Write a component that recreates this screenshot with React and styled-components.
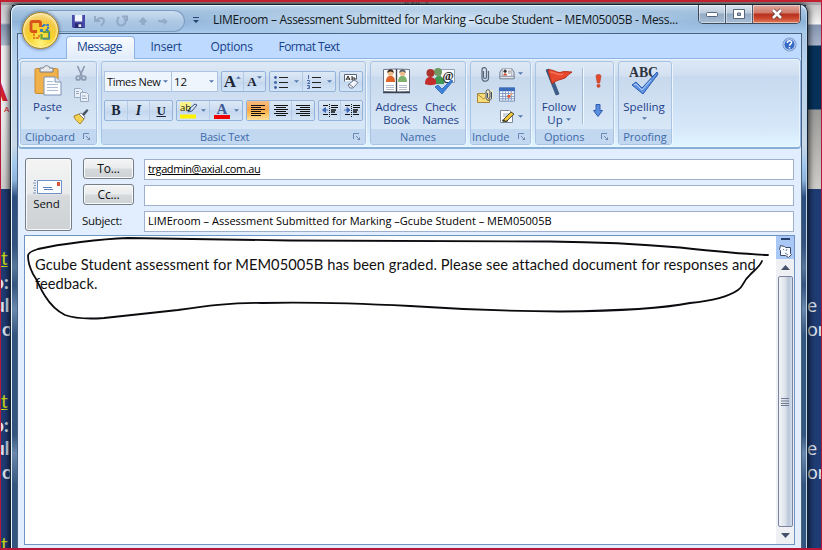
import React from "react";
import styled, { createGlobalStyle, css } from "styled-components";

const GlobalStyle = createGlobalStyle`
  *, *::before, *::after { box-sizing: border-box; }
  body { margin: 0; }
  button { margin: 0; padding: 0; font: inherit; color: inherit; }
  svg { display: block; flex: none; overflow: visible; }
`;

const Screen = styled.div`
  position: relative;
  width: 822px;
  height: 550px;
  overflow: hidden;
  background: #1f3c74;
  font-family: "Open Sans", "Noto Sans", sans-serif;
  font-size: 12px;
  line-height: 16px;
  white-space: nowrap;
`;

/* ---------- page behind the window ---------- */

const Backdrop = styled.div`
  display: flex;
  justify-content: space-between;
  height: 550px;
`;
const SideStrip = styled.div`
  width: ${(p) => p.$w}px;
  height: 550px;
  overflow: hidden;
  background: ${(p) => p.$bg};
`;
const Logo = styled.div`
  height: 238px;
  padding-top: 72px;
  color: #d5202c;
  font: bold 34px/34px "Liberation Sans", sans-serif;
  text-indent: -16px;
  small { display: block; font: 8px/8px "Liberation Sans", sans-serif; text-indent: 4px; }
`;
const Passage = styled.div`
  height: 143px;
  padding-top: 8px;
  font: ${(p) => (p.$bold ? "bold" : "normal")} 19px/23.6px Lato, sans-serif;
  color: #dfe5ef;
  u { color: #c9d814; font-weight: normal; }
`;
const Line = styled.div`
  height: 23.6px;
  text-indent: ${(p) => p.$x || 0}px;
`;
const TopStrip = styled.div`
  position: absolute;
  inset: 0 0 auto 0;
  height: 5px;
  overflow: hidden;
  background: #a9a4a8;
  color: #555;
  font-size: 10px;
  line-height: 2px;
  padding-left: 401px;
`;
const RedFrame = styled.div`
  position: absolute;
  inset: 0;
  border: solid #b5183a;
  border-width: 2px 1px 2px 1px;
  border-top-color: #c2202e;
  pointer-events: none;
`;

/* ---------- window chrome ---------- */

const Window = styled.div`
  position: absolute;
  left: 10px;
  top: 4px;
  width: 798px;
  height: 562px;
  border: 1px solid #15202e;
  border-radius: 8px 8px 0 0;
  padding: 0 6px;
  box-shadow: inset 1px 1px 0 #e8f3fc, inset -1px 0 0 #b9d4ec, 0 0 6px 1px rgba(0, 0, 0, 0.75);
  background:
    linear-gradient(180deg, #b4cde6 0, #8fb1d4 12px, #a8c6e5 28px, #b7d3ee 60px, #c8d8e6 140px, #a0c6ec 160px, #8fb4dc 175px, #2d4e80 192px, #33527f 240px, #56779a 262px, #34547f 280px, #6a88ad 304px, #34557f 330px, #34557f 430px, #6a88ad 448px, #34557f 480px, #34557f 100%);
`;
const TitleBar = styled.div`
  display: flex;
  height: 28px;
  margin: 0 -5px;
  padding: 0 5px 0 34px;
  border-radius: 7px 7px 0 0;
  background:
    radial-gradient(ellipse 280px 15px at 435px 16px, rgba(222, 236, 250, 0.95), rgba(200, 222, 245, 0)),
    linear-gradient(#c3d8ec 0, #a5c3e0 6px, #8eb3d8 17px, #a9cbec 28px);
  box-shadow: inset 0 1px 0 #eaf4fd;
`;
const QuickAccess = styled.div`
  display: flex;
  align-items: center;
  gap: 8px;
  width: 137px;
  height: 22px;
  margin: 5px 0 0 2px;
  padding-left: 24px;
  border: 1px solid #7e9cc0;
  border-left: 0;
  border-radius: 0 12px 12px 0;
  background: linear-gradient(rgba(215, 230, 245, 0.75), rgba(160, 190, 222, 0.5));
`;
const Customize = styled.div`
  margin: 12px 0 0 8px;
`;
const Title = styled.div`
  margin: 7px 0 0 14px;
  width: 473px;
  color: #111820;
  font-size: 12px;
  letter-spacing: -0.3px;
`;
const Caption = styled.div`
  display: flex;
  width: 103px;
  height: 19px;
  margin-left: auto;
  border: 1px solid #3c4a5c;
  border-top: 0;
  border-radius: 0 0 5px 5px;
  overflow: hidden;
`;
const CaptionButton = styled.button`
  display: flex;
  align-items: center;
  justify-content: center;
  flex: ${(p) => (p.$close ? 48 : 27)};
  border: 0;
  border-left: ${(p) => (p.$first ? "0" : "1px solid #4a5a70")};
  box-shadow: inset 0 0 0 1px rgba(255, 255, 255, 0.45);
  background: ${(p) =>
    p.$close
      ? "linear-gradient(#dfa79c 0, #d07a6a 8px, #b8301c 9px, #c8432c 13px, #e38a68 19px)"
      : "linear-gradient(#dbe5ee 0, #bccbdb 8px, #94abc4 9px, #a8bfd6 19px)"};
`;
const OfficeOrb = styled.button`
  position: absolute;
  left: 11px;
  top: 7px;
  width: 37px;
  height: 37px;
  border: 1px solid #a87f1c;
  border-radius: 50%;
  display: grid;
  place-items: center;
  background: radial-gradient(circle at 50% 85%, #fff27c 0, #f7d32a 35%, #f3c844 62%, #fbf0cc 100%);
  box-shadow: 0 0 3px 1px rgba(70, 90, 120, 0.6), inset 0 0 2px 1px #fff3c0;
`;
const Client = styled.div`
  width: 785px;
  height: 530px;
  border: 1px solid #4c6482;
  border-bottom: 0;
  background: #e2eefd;
`;

/* ---------- ribbon ---------- */

const Tabs = styled.div`
  display: flex;
  height: 24px;
  background: #bfdaff;
  padding: 2px 4px 0 48px;
  color: #15428b;
`;
const Tab = styled.div`
  height: 22px;
  width: ${(p) => p.$w}px;
  padding-top: 3px;
  text-align: center;
  letter-spacing: ${(p) => p.$ls || 0}px;
  ${(p) =>
    p.$active &&
    css`
      border: 1px solid #8db2e3;
      border-bottom: 0;
      border-radius: 4px 4px 0 0;
      background: linear-gradient(#f8fbff, #e1ecfa);
      padding: 2px 2px 0 0;
      height: 23px;
      position: relative;
    `}
`;
const Help = styled.div`
  margin: 1px 0 0 auto;
`;
const RibbonPanel = styled.div`
  display: flex;
  gap: 4px;
  height: 91px;
  padding: 3px 0 0 1px;
  border: 1px solid #8db2e3;
  border-bottom: 2px solid #86b0d8;
  border-radius: 4px;
  background: linear-gradient(#dce9f7 0, #d0def0 16px, #c7d9ee 17px, #d5e7f9 68px, #dff4ff 86px);
  box-shadow: inset 0 0 0 1px rgba(240, 248, 255, 0.7);
`;
const Group = styled.section`
  display: flex;
  flex-direction: column;
  width: ${(p) => p.$w}px;
  height: 84px;
  margin-top: -1px;
  border: 1px solid #a9c4e2;
  border-radius: 3px;
  overflow: hidden;
  box-shadow: 1px 1px 0 #edf5fe;
  background: linear-gradient(#dee9f5 0, #d3e0f0 14px, #c8d9ed 15px, #d9e8f7 68px);
`;
const GroupBody = styled.div`
  display: flex;
  flex: 1;
`;
const GroupLabel = styled.div`
  display: flex;
  align-items: center;
  justify-content: ${(p) => (p.$spread ? "space-between" : "center")};
  height: 15px;
  padding: 0 ${(p) => p.$pr || 0}px 0 ${(p) => p.$pl || 0}px;
  background: #c1d8f0;
  color: #3e6aaa;
  font-size: 11px;
  line-height: 15px;
  letter-spacing: ${(p) => p.$ls || 0}px;
`;
const BigButton = styled.button`
  display: flex;
  flex-direction: column;
  align-items: center;
  width: ${(p) => p.$w}px;
  padding-top: ${(p) => p.$pt ?? 3}px;
  border: 0;
  background: none;
  color: #1c3f8a;
  font-size: 11.5px;
  line-height: 13px;
  letter-spacing: ${(p) => p.$ls || 0}px;
  svg.art { margin-bottom: ${(p) => p.$gap ?? 4}px; }
  svg.caret { margin-top: 4px; }
`;
const Inline = styled.span`
  display: flex;
  align-items: center;
  gap: 3px;
  button & svg.caret { margin-top: 0; }
`;
const IconColumn = styled.div`
  display: flex;
  flex-direction: column;
  align-items: ${(p) => p.$align || "center"};
  gap: ${(p) => p.$gap}px;
  padding-top: ${(p) => p.$pt}px;
  width: ${(p) => p.$w}px;
`;
const IconWithCaret = styled.span`
  display: flex;
  align-items: center;
  gap: 3px;
`;
const Separator = styled.div`
  width: 2px;
  height: 56px;
  margin-top: 6px;
  border-left: 1px solid #9fbbdc;
  border-right: 1px solid #f2f8ff;
`;
const TextTools = styled.div`
  display: flex;
  flex-direction: column;
  gap: 8px;
  padding: 9px 0 0 2px;
`;
const ToolRow = styled.div`
  display: flex;
  gap: 3px;
  height: 21px;
`;
const Combo = styled.div`
  display: flex;
  align-items: center;
  justify-content: space-between;
  width: ${(p) => p.$w}px;
  margin-right: ${(p) => p.$mr || 0}px;
  padding: 0 3px 0 2px;
  border: 1px solid #abc4e4;
  background: #eff5fd;
  color: #111;
  font-size: ${(p) => p.$fs || 11.5}px;
  letter-spacing: ${(p) => p.$ls || 0}px;
`;
const ToolSet = styled.div`
  display: flex;
  width: ${(p) => p.$w}px;
  border: 1px solid #93b3da;
  border-radius: 2px;
  background: linear-gradient(#dde9f6, #cbdcf0 50%, #c2d6ed 51%, #d3e4f6);
`;
const Tool = styled.button`
  display: flex;
  align-items: center;
  justify-content: center;
  gap: ${(p) => p.$gap ?? 4}px;
  flex: 1;
  border: 0;
  border-right: 1px solid #b4cbe7;
  background: ${(p) => (p.$on ? "linear-gradient(#f5bd84, #f7a94d 45%, #fbb84e 60%, #fde09a)" : "none")};
  &:last-child { border-right: 0; }
  ${(p) => p.$raised && css`svg.caret { align-self: flex-start; margin-top: 4px; }`}
`;
const Glyph = styled.span`
  color: #1b2536;
  font: ${(p) => p.$font};
  text-decoration: ${(p) => (p.$underline ? "underline" : "none")};
`;

/* ---------- message header ---------- */

const Header = styled.div`
  display: flex;
  gap: 11px;
  padding: 10px 0 0 7px;
  height: 86px;
`;
const buttonFace = css`
  border: 1px solid #747c86;
  border-radius: 3px;
  background: linear-gradient(#f4f4f4, #e9ebec 48%, #d7dadd 52%, #cfd2d5);
  box-shadow: inset 0 0 0 1px #f8fafb;
  color: #111;
`;
const SendButton = styled.button`
  ${buttonFace}
  display: flex;
  flex-direction: column;
  align-items: center;
  width: 47px;
  height: 73px;
  margin-top: -1px;
  padding: 21px 2px 0 0;
  font-size: 11.5px;
  span { margin: 2px 2px 0 0; letter-spacing: -0.1px; }
`;
const Fields = styled.div`
  display: grid;
  grid-template-columns: 51px 650px;
  grid-auto-rows: 21px;
  column-gap: 10px;
  row-gap: 5px;
`;
const FieldButton = styled.button`
  ${buttonFace}
  height: 21px;
  margin-top: -1px;
  padding-top: 1px;
  font-size: 12px;
  letter-spacing: -0.2px;
`;
const FieldLabel = styled.div`
  padding-top: 2px;
  margin-left: -1px;
  font-size: 11.5px;
  letter-spacing: -0.3px;
  color: #111;
`;
const Field = styled.div`
  height: 21px;
  padding: 1px 3px;
  border: 1px solid #9fb0ce;
  background: #fff;
  color: #000;
  font-size: 11px;
  letter-spacing: ${(p) => p.$ls || 0}px;
  text-decoration: ${(p) => (p.$link ? "underline" : "none")};
`;

/* ---------- message body ---------- */

const Editor = styled.div`
  display: flex;
  width: 771px;
  height: 310px;
  margin-left: 6px;
  border: 1px solid #6f93c4;
  background: #fff;
`;
const Copy = styled.div`
  width: 751px;
  padding: 19px 0 0 10px;
  color: #111;
  font: 14.67px/19px Lato, "Liberation Sans", sans-serif;
  font-variant-ligatures: none;
  letter-spacing: 0.05px;
`;
const ScrollBar = styled.div`
  display: flex;
  flex-direction: column;
  align-items: center;
  width: 18px;
  background: #eef0f4;
`;
const RulerToggle = styled.div`
  display: flex;
  flex-direction: column;
  align-items: center;
  gap: 5px;
  width: 18px;
  height: 23px;
  padding-top: 2px;
  background: #a9c8f5;
`;
const SplitHandle = styled.div`
  width: 9px;
  height: 2px;
  background: #26406e;
`;
const ArrowCell = styled.div`
  display: grid;
  place-items: center;
  height: 17px;
`;
const Thumb = styled.div`
  display: grid;
  place-items: center;
  width: 15px;
  flex: 1;
  border: 1px solid #79849f;
  border-radius: 2px;
  background: linear-gradient(90deg, #f1f3f6, #dfe4ec 45%, #b9c6d8 75%, #d4e0ee);
`;
const Ink = styled.svg`
  position: absolute;
  left: 0;
  top: 0;
  pointer-events: none;
`;

/* ---------- drawings ---------- */

const Caret = ({ up, size = 5 }) => (
  <svg className="caret" width={size} height="3" viewBox="0 0 6 3">
    <path d={up ? "M0 3h6L3 0z" : "M0 0h6L3 3z"} fill="#5377ab" />
  </svg>
);
const Launcher = () => (
  <svg width="8" height="8" viewBox="0 0 8 8" fill="none" stroke="#6a8ab5">
    <path d="M.5 6V.5H6M3 3l3 3" />
    <path d="M7.5 3v4.5H3z" fill="#6a8ab5" stroke="#f0f6fd" strokeWidth=".5" />
  </svg>
);
const OfficeLogo = () => (
  <svg width="23" height="23" viewBox="0 0 23 23" fill="none">
    <path d="M8 12.500H3.500Q2 12.500 2 11V4Q2 2.500 3.500 2.500H10Q11.500 2.500 11.500 4V8" stroke="#d9541a" strokeWidth="2.800" />
    <path d="M14 6h5v5h-3M14 6v2" stroke="#3f7fc0" strokeWidth="2" strokeDasharray="2.500 .8" />
    <path d="M5 14.500V19h5v-3" stroke="#e07f1b" strokeWidth="1.800" strokeDasharray="2.500 .8" />
    <path d="M14 13h6v6.500h-7.500V15" stroke="#6ba33a" strokeWidth="2.200" />
    <path d="M14 20h6.500V13" stroke="#3f7fc0" strokeWidth="1" />
    <path d="M11 10h3v3h-3z" fill="#3f7fc0" />
  </svg>
);
const SaveIcon = () => (
  <svg width="13" height="13" viewBox="0 0 14 14">
    <path d="M0 0h14v14H1l-1-1z" fill="#4749a8" />
    <path d="M3 0h8v7H3z" fill="#f1f5fc" />
    <path d="M3 9h8v5H3z" fill="#24296d" />
    <path d="M7 10h3v3H7z" fill="#eef" />
  </svg>
);
const UndoIcon = () => (
  <svg width="14" height="12" viewBox="0 0 14 12" fill="none" stroke="#93a9c6" strokeWidth="2">
    <path d="M3 5.500C5 3 11 1 11 6c0 2-1 3-3 5M2 1v5h5" />
  </svg>
);
const RedoIcon = () => (
  <svg width="14" height="12" viewBox="0 0 14 12" fill="none" stroke="#93a9c6" strokeWidth="2">
    <path d="M4 2C1 5 2 10.500 6 10.500S12 6 9 3M7 1.500h5V6" />
  </svg>
);
const NavArrow = ({ down }) => (
  <svg width="12" height="9" viewBox="0 0 12 9" fill="#93aac8">
    <path d={down ? "M1 3h5V1l5 3.500L7 8V6L1 5z" : "M6 0l5 5H8v3H4V5H1z"} />
  </svg>
);
const HelpIcon = () => (
  <svg width="15" height="15" viewBox="0 0 15 15">
    <circle cx="7.500" cy="7.500" r="6.500" fill="#3469c7" stroke="#6f91c9" />
    <circle cx="7.500" cy="7.500" r="5.600" fill="none" stroke="#e9f2ff" />
    <path d="M5.300 6c0-3 4.600-2.800 4.300-.3-.2 1.300-2 1.300-2 3M7.500 10v1.400" fill="none" stroke="#fff" strokeWidth="1.500" />
  </svg>
);
const PasteIcon = () => (
  <svg className="art" width="28" height="31" viewBox="0 0 28 31">
    <rect x="1" y="3.500" width="23" height="25" rx="1.500" fill="#f0b04a" stroke="#c98a30" />
    <path d="M6 3h3.500c0-3 6-3 6 0H19v4H6z" fill="#e6e8eb" stroke="#777f8b" />
    <path d="M10 12h11l6 5v13H10z" fill="#fbfdff" stroke="#7e92b1" />
    <path d="M21 12v5h6" fill="#dfe9f6" stroke="#7e92b1" />
    <path d="M13 16.500h6M13 19.500h11M13 22.500h11M13 25.500h11" stroke="#aebdd5" />
  </svg>
);
const CutIcon = () => (
  <svg width="12" height="15" viewBox="0 0 12 15" fill="none" stroke="#8c9bb2" strokeWidth="1.700">
    <path d="M2.500 0l4.500 10M9.500 0L5 10" />
    <circle cx="3.200" cy="12" r="2" />
    <circle cx="8.800" cy="12" r="2" />
  </svg>
);
const CopyIcon = () => (
  <svg width="15" height="14" viewBox="0 0 15 14" fill="#e9eff7" stroke="#9aaac3">
    <path d="M.5.5h6l2 2v7h-8z" />
    <path d="M6.500 4.500h6l2 2v7h-8zM8 8h4M8 10.500h5M2 3.500h3M2 5.500h3" />
  </svg>
);
const BrushIcon = () => (
  <svg width="16" height="15" viewBox="0 0 16 15">
    <path d="M1 7l5-2 5 5-4 5C5 13 1 10 1 7z" fill="#f2d250" stroke="#a5832a" />
    <path d="M6 5l2-1 4 4-1 2z" fill="#fff" stroke="#667" strokeWidth=".7" />
    <path d="M9 5l5-5 1.500 1.500L11 7z" fill="#4b5464" />
  </svg>
);
const ListIcon = ({ numbered }) => (
  <svg width="14" height="14" viewBox="0 0 14 14">
    <path d="M5 2.500h9M5 7.500h9M5 12.500h9" stroke="#222" />
    {numbered ? (
      <path d="M1.500 0v4M0 5.500h2.500V7L.5 8.500H3M0 10.500h2.500v3H0M1 12h1.500" fill="none" stroke="#4c6aa8" />
    ) : (
      <g fill="#3f61a5"><circle cx="1.500" cy="2.500" r="1.400" /><circle cx="1.500" cy="7.500" r="1.400" /><circle cx="1.500" cy="12.500" r="1.400" /></g>
    )}
  </svg>
);
const ClearIcon = () => (
  <svg width="17" height="17" viewBox="0 0 17 17">
    <path d="M1.500 8.500v-7h12v5" fill="#fff" stroke="#56647c" />
    <path d="M3 7l2-4 2 4M4 6h3M9 3v4h3V5H9" fill="none" stroke="#222" />
    <path d="M5 12l6-5 4 2.500-5 5.500H7z" fill="#f7f8fb" stroke="#6e7890" />
    <path d="M6 11l4 3" stroke="#6e7890" />
  </svg>
);
const AlignIcon = ({ kind }) => {
  const rows = [14, 10, 14, 10, 14, 10];
  return (
    <svg width="14" height="11" viewBox="0 0 14 11">
      {rows.map((w, i) => {
        const x = kind === "left" ? 0 : kind === "center" ? (14 - w) / 2 : 14 - w;
        return <rect key={i} x={x} y={i * 2} width={w} height="1" fill="#111" />;
      })}
    </svg>
  );
};
const IndentIcon = ({ inward }) => (
  <svg width="16" height="13" viewBox="0 0 16 13">
    <path d="M1 1.500h5M9 1.500h7M9 3.500h7M1 10.500h5M9 10.500h6" stroke="#111" />
    <path d="M9 6h5M9 8h4" stroke="#111" strokeWidth="1.600" />
    <path d="M7.500 0v13" stroke="#111" strokeDasharray="1 1" />
    <path d={inward ? "M0 6h3M3 3.500l3 2.500-3 2.500z" : "M6 6H3M3.500 3.500L.5 6l3 2.500z"} fill="#3d67b5" stroke="#3d67b5" strokeWidth=".9" />
  </svg>
);
const HighlightIcon = () => (
  <svg width="17" height="17" viewBox="0 0 17 17">
    <path d="M0 0h11v9H0z" fill="#f8f48a" />
    <path d="M0 12.500h16v4H0z" fill="#fff200" />
    <path d="M8 10l1-3 6-5 2 1-5 6z" fill="#dbe4f4" stroke="#37517c" />
    <text x="0" y="8.500" fontSize="9.500" fontFamily="Open Sans" fill="#111">ab</text>
  </svg>
);
const FontColorIcon = () => (
  <svg width="16" height="17" viewBox="0 0 16 17">
    <path d="M0 13h16v4H0z" fill="#f00000" />
    <text x="2.500" y="11.500" fontSize="15" fontWeight="bold" fontFamily="Liberation Serif" fill="#3e5a95">A</text>
  </svg>
);
const Head = ({ x, y, hair, coat }) => (
  <g transform={`translate(${x} ${y})`}>
    <path d="M0 13c0-5 2-6 4.500-6S9 8 9 13z" fill={coat} />
    <circle cx="4.500" cy="4" r="3" fill="#eebd8e" />
    <path d="M1.200 4c0-5 6.600-5 6.600 0-2-2-4-2-6.600 0z" fill={hair} />
  </g>
);
const AddressBookIcon = () => (
  <svg className="art" width="29" height="27" viewBox="0 0 29 27">
    <path d="M1.500 2.500l13-.5v23l-13-.5zM27.500 2.500l-13-.5v23l13-.5z" fill="#fff" stroke="#6b7587" />
    <path d="M14.500 2v23M1 25.500h27" stroke="#3b4353" strokeWidth="1.400" />
    <Head x={4} y={2} hair="#3a2b22" coat="#e0632a" />
    <Head x={16} y={2} hair="#57606f" coat="#7fb070" />
    <path d="M4 18.500h8M4 20.500h8M4 22.500h8M17 18.500h8M17 20.500h8M17 22.500h8" stroke="#b3bac7" />
  </svg>
);
const CheckNamesIcon = () => (
  <svg className="art" width="31" height="28" viewBox="0 0 31 28">
    <path d="M15.500 2.500h14v13h-14z" fill="#f8fafc" stroke="#95a0b2" />
    <circle cx="13" cy="5" r="4" fill="#6f9a62" />
    <path d="M9 17c0-6 2-8 5-8s6 3 5 8z" fill="#3f9853" />
    <circle cx="5.500" cy="6" r="4" fill="#a8342d" />
    <path d="M0 17c0-5 2-7 5-7s7 2 6 7c-3 1.500-8 1.500-11 0z" fill="#c42b2b" />
    <text x="17.500" y="12.500" fontSize="12" fontWeight="bold" fontFamily="Liberation Serif" fill="#222">@</text>
    <path d="M10 20l3-2 4 4 9-9 2 1-11 13z" fill="#3d82dd" stroke="#2257a5" strokeWidth=".7" />
  </svg>
);
const ClipIcon = () => (
  <svg width="8" height="15" viewBox="0 0 8 15" fill="none" stroke="#58647a" strokeWidth="1.200">
    <path d="M2.500 4v6c0 2 3 2 3 0V3C5.500-.5 1 0 1 3v8c0 4.500 6.500 4 6.500 0V4" />
  </svg>
);
const AttachItemIcon = () => (
  <svg width="16" height="15" viewBox="0 0 16 15">
    <path d="M.5 4.500h12v9H.5z" fill="#f7dc78" stroke="#a9873a" />
    <path d="M.5 5l6 5 6-5" fill="none" stroke="#a9873a" />
    <path d="M8 1h8v9H8z" fill="#f5ecc0" opacity=".8" />
    <path d="M10.500 4v4c0 2 2.500 2 2.500 0V3c0-3-4-3-4 0v6c0 3 5.500 3 5.500 0V3" fill="none" stroke="#434d62" />
  </svg>
);
const CardIcon = () => (
  <svg width="16" height="13" viewBox="0 0 17 13">
    <path d="M1 5l2-3h11l2 3v7H1z" fill="#e4e8ef" stroke="#68758b" />
    <path d="M3.500 1.500h10v8h-10z" fill="#fff" stroke="#7e8ba0" strokeWidth=".7" />
    <circle cx="6.500" cy="4" r="1.700" fill="#333" /><path d="M4.500 8.500c0-3 4-3 4 0z" fill="#d5472d" />
    <path d="M9.500 4h3M9.500 6h3" stroke="#777" />
    <path d="M1 9.500h15V12H1z" fill="#dfe3ea" stroke="#68758b" strokeWidth=".7" />
  </svg>
);
const CalendarIcon = () => (
  <svg width="16" height="15" viewBox="0 0 17 15">
    <path d="M.5.5h16v14H.5z" fill="#fff" stroke="#6c86b3" />
    <path d="M0 0h17v4H0z" fill="#3d6cbb" />
    <path d="M4 4v10M7 4v10M10 4v10M13 4v10M1 6.500h15M1 9.500h15M1 12h15" stroke="#7b95c3" />
    <path d="M9 8h3v3H9z" fill="#e4552d" /><path d="M12 6h2v2h-2z" fill="#f2a086" />
  </svg>
);
const SignatureIcon = () => (
  <svg width="16" height="15" viewBox="0 0 16 15">
    <path d="M1.500 1.500h9l3 3v9h-12z" fill="#fff" stroke="#7c879a" />
    <path d="M4 5h6M4 7h5" stroke="#9aa8c0" />
    <path d="M5 10l7-7 3 2-7 7-4 1z" fill="#edc63b" stroke="#4b4a36" />
    <path d="M3 11.500c3-2 3 3 6 0" fill="none" stroke="#222" />
  </svg>
);
const FlagIcon = () => (
  <svg className="art" width="30" height="28" viewBox="0 0 30 28">
    <path d="M2 2l3-1 10 25-3 1z" fill="#3c608f" stroke="#284468" strokeWidth=".7" />
    <path d="M4 2c6-1 9 4 14 2 3-1 6 0 10 0-5 3-5 6-10 7-4 1-7 2-10 5z" fill="#e8482d" stroke="#b62e1a" />
    <path d="M6 4c5 0 8 4 13 2" stroke="#f7765a" strokeWidth="1.500" fill="none" />
  </svg>
);
const UrgentIcon = () => (
  <svg width="7" height="14" viewBox="0 0 7 14" fill="#e2492b" stroke="#b93720" strokeWidth=".6">
    <path d="M1 2c0-2 5-2 5 0L4.700 9H2.300z" /><circle cx="3.500" cy="11.800" r="1.600" />
  </svg>
);
const LowIcon = () => (
  <svg width="10" height="13" viewBox="0 0 10 13">
    <path d="M3 .5h4v6h2.500L5 12.500.5 6.500H3z" fill="#5c8ee0" stroke="#2c5cae" />
  </svg>
);
const SpellingIcon = () => (
  <svg className="art" width="32" height="30" viewBox="0 0 32 30">
    <text x="1" y="11" fontSize="14" fontWeight="bold" fontFamily="Liberation Serif" fill="#2d3440" textLength="29" lengthAdjust="spacingAndGlyphs">ABC</text>
    <path d="M4 19l4-3 6 6L29 6l1 2-15 20z" fill="#5f93e6" stroke="#2b5bae" />
    <path d="M6 19l2-1 6 6 9-10" stroke="#b2cffa" fill="none" />
  </svg>
);
const SendIcon = () => (
  <svg width="29" height="14" viewBox="0 0 29 14">
    <path d="M4.500.5h24v13h-24z" fill="#fcfdff" stroke="#6f93c9" />
    <path d="M1 .5h2M0 3h3M1 5.500h2M0 8h3M1 10.500h2M0 13h3" stroke="#8196b8" />
    <path d="M24 2h3v4h-3z" fill="#d9563a" />
    <path d="M10 7.500h9M11 9.500h9" stroke="#5c7ebd" />
  </svg>
);
const PageBrowseIcon = () => (
  <svg width="13" height="13" viewBox="0 0 13 13">
    <path d="M1.500.5l4 1 1 1h5v6l1 1-3 3-3-2h-5v-5l-1-1z" fill="#f8fbff" stroke="#3d4c67" />
    <path d="M4 4l1 1M8 4l-1 2M6 8l3 2" stroke="#6f7c95" />
  </svg>
);

/* ---------- composition ---------- */

const LeftPassage = () => (
  <Passage $bold>
    <Line $x={1}><u>t</u></Line><Line $x={-7}>o:</Line><Line $x={-6}>ul</Line><Line $x={2}>o</Line>
  </Passage>
);
const RightPassage = () => (
  <Passage>
    <Line /><Line /><Line $x={1}>e</Line><Line $x={1}>on</Line>
  </Passage>
);

const PageBehind = () => (
  <Backdrop>
    <SideStrip $w={12} $bg="linear-gradient(#c4c4c8 0, #d5d8dd 23px, #8295b1 25px, #b0bed0 45px, #efeff1 46px, #efeff1 110px, #cdccca 189px, #1f3c74 189px)">
      <Logo>A<small>A</small></Logo>
      <LeftPassage /><LeftPassage /><LeftPassage />
    </SideStrip>
    <SideStrip $w={16} $bg="linear-gradient(#bbb 0, #f4f4f4 24px, #8595b0 25px, #a7b3c9 45px, #06325a 46px, #06325a 109px, #9a9a98 110px, #cfcdc9 189px, #1f3c74 189px)">
      <Logo />
      <RightPassage /><RightPassage />
    </SideStrip>
  </Backdrop>
);

const Ribbon = () => (
  <RibbonPanel>
    <Group $w={77}>
      <GroupBody>
        <BigButton $w={53} $pt={3} $gap={4} $ls={-0.1}>
          <PasteIcon />Paste<Caret />
        </BigButton>
        <IconColumn $w={14} $gap={7} $pt={4}><CutIcon /><CopyIcon /><BrushIcon /></IconColumn>
      </GroupBody>
      <GroupLabel $spread $pl={4} $pr={5}>Clipboard<Launcher /></GroupLabel>
    </Group>
    <Group $w={265}>
      <GroupBody>
        <TextTools>
          <ToolRow>
            <Combo $w={68} $mr={-4} $fs={11} $ls={-0.3}>Times New<Caret /></Combo>
            <Combo $w={47}>12<Caret /></Combo>
            <ToolSet $w={45}>
              <Tool $raised $gap={0}><Glyph $font='bold 17px "Liberation Serif", serif'>A</Glyph><Caret up /></Tool>
              <Tool $raised $gap={0}><Glyph $font='bold 13px "Liberation Serif", serif'>A</Glyph><Caret /></Tool>
            </ToolSet>
            <ToolSet $w={67}>
              <Tool $gap={6}><ListIcon /><Caret /></Tool>
              <Tool $gap={6}><ListIcon numbered /><Caret /></Tool>
            </ToolSet>
            <ToolSet $w={24}><Tool><ClearIcon /></Tool></ToolSet>
          </ToolRow>
          <ToolRow>
            <ToolSet $w={69}>
              <Tool><Glyph $font='bold 14px "Liberation Serif", serif'>B</Glyph></Tool>
              <Tool><Glyph $font='italic bold 14px "Liberation Serif", serif'>I</Glyph></Tool>
              <Tool><Glyph $underline $font='bold 13px "Liberation Serif", serif'>U</Glyph></Tool>
            </ToolSet>
            <ToolSet $w={67}>
              <Tool><HighlightIcon /><Caret /></Tool>
              <Tool><FontColorIcon /><Caret /></Tool>
            </ToolSet>
            <ToolSet $w={69}>
              <Tool $on><AlignIcon kind="left" /></Tool>
              <Tool><AlignIcon kind="center" /></Tool>
              <Tool><AlignIcon kind="right" /></Tool>
            </ToolSet>
            <ToolSet $w={45}>
              <Tool><IndentIcon /></Tool>
              <Tool><IndentIcon inward /></Tool>
            </ToolSet>
          </ToolRow>
        </TextTools>
      </GroupBody>
      <GroupLabel $spread $pl={98} $pr={4} $ls={-0.2}>Basic Text<Launcher /></GroupLabel>
    </Group>
    <Group $w={96}>
      <GroupBody>
        <BigButton $w={51} $pt={5} $gap={6} $ls={-0.2}><AddressBookIcon />Address<span>Book</span></BigButton>
        <BigButton $w={37} $pt={5} $gap={5} $ls={-0.25}><CheckNamesIcon />Check<span>Names</span></BigButton>
      </GroupBody>
      <GroupLabel>Names</GroupLabel>
    </Group>
    <Group $w={61}>
      <GroupBody>
        <IconColumn $w={28} $gap={7} $pt={5}><ClipIcon /><AttachItemIcon /></IconColumn>
        <IconColumn $w={30} $gap={7} $pt={5} $align="flex-start">
          <IconWithCaret><CardIcon /><Caret /></IconWithCaret>
          <CalendarIcon />
          <IconWithCaret><SignatureIcon /><Caret /></IconWithCaret>
        </IconColumn>
      </GroupBody>
      <GroupLabel $spread $pl={1} $pr={4}>Include<Launcher /></GroupLabel>
    </Group>
    <Group $w={79}>
      <GroupBody>
        <BigButton $w={46} $pt={6} $gap={4}>
          <FlagIcon />Follow<Inline>Up<Caret /></Inline>
        </BigButton>
        <Separator />
        <IconColumn $w={28} $gap={16} $pt={12}><UrgentIcon /><LowIcon /></IconColumn>
      </GroupBody>
      <GroupLabel $spread $pl={8} $pr={4}>Options<Launcher /></GroupLabel>
    </Group>
    <Group $w={54}>
      <GroupBody>
        <BigButton $w={50} $pt={4} $gap={4} $ls={-0.05}><SpellingIcon />Spelling<Caret /></BigButton>
      </GroupBody>
      <GroupLabel>Proofing</GroupLabel>
    </Group>
  </RibbonPanel>
);

export default function App() {
  return (
    <Screen>
      <GlobalStyle />
      <PageBehind />
      <TopStrip>Styles</TopStrip>
      <Window>
        <TitleBar>
          <QuickAccess>
            <SaveIcon /><UndoIcon /><RedoIcon /><NavArrow /><NavArrow down />
          </QuickAccess>
          <Customize>
            <svg width="6" height="6" viewBox="0 0 6 6" fill="#29456f"><path d="M0 0h6v1H0zM0 3h6L3 6z" /></svg>
          </Customize>
          <Title>LIMEroom – Assessment Submitted for Marking –Gcube Student – MEM05005B - Mess...</Title>
          <Caption>
            <CaptionButton $first aria-label="Minimize">
              <svg width="12" height="5" viewBox="0 0 12 5"><rect x=".5" y=".5" width="11" height="4" rx="1" fill="#fff" stroke="#56657a" /></svg>
            </CaptionButton>
            <CaptionButton aria-label="Maximize">
              <svg width="12" height="10" viewBox="0 0 12 10"><path d="M.5.5h11v9H.5z M4.500 4h3v2.500h-3z" fill="#fff" fillRule="evenodd" stroke="#56657a" /></svg>
            </CaptionButton>
            <CaptionButton $close aria-label="Close">
              <svg width="12" height="10" viewBox="0 0 12 10" fill="none"><path d="M2 1l8 8M10 1L2 9" stroke="#5f3a3a" strokeWidth="4" /><path d="M2 1l8 8M10 1L2 9" stroke="#fff" strokeWidth="2.600" /></svg>
            </CaptionButton>
          </Caption>
        </TitleBar>
        <Client>
          <Tabs>
            <Tab $active $w={69} $ls={-0.55}>Message</Tab>
            <Tab $w={62} $ls={-0.2}>Insert</Tab>
            <Tab $w={69} $ls={-0.3}>Options</Tab>
            <Tab $w={86} $ls={-0.6}>Format Text</Tab>
            <Help><HelpIcon /></Help>
          </Tabs>
          <Ribbon />
          <Header>
            <SendButton><SendIcon /><span>Send</span></SendButton>
            <Fields>
              <FieldButton>To...</FieldButton><Field $link $ls={-0.42}>trgadmin@axial.com.au</Field>
              <FieldButton>Cc...</FieldButton><Field />
              <FieldLabel>Subject:</FieldLabel>
              <Field>LIMEroom – Assessment Submitted for Marking –Gcube Student – MEM05005B</Field>
            </Fields>
          </Header>
          <Editor>
            <Copy>
              Gcube Student assessment for MEM05005B has been graded. Please see attached document for responses and<br />feedback.
            </Copy>
            <ScrollBar>
              <RulerToggle><SplitHandle /><PageBrowseIcon /></RulerToggle>
              <ArrowCell><svg width="9" height="5" viewBox="0 0 9 5"><path d="M0 5h9L4.500 0z" fill="#45506a" /></svg></ArrowCell>
              <Thumb><svg width="8" height="8" viewBox="0 0 8 8"><path d="M0 .5h8M0 3h8M0 5.500h8M0 7.500h8" stroke="#6b7890" /></svg></Thumb>
              <ArrowCell><svg width="9" height="5" viewBox="0 0 9 5"><path d="M0 0h9L4.500 5z" fill="#45506a" /></svg></ArrowCell>
            </ScrollBar>
          </Editor>
        </Client>
        <OfficeOrb aria-label="Office"><OfficeLogo /></OfficeOrb>
      </Window>
      <Ink width="822" height="550" viewBox="0 0 822 550" fill="none" stroke="#0b0b0f" strokeWidth="1.800" strokeLinecap="round" strokeLinejoin="round">
        <path d="M768 255C742 254 712 251 680 247.500C640 244 600 242 550 241.500C450 241 360 241 290 240.500C230 240 170 239 128 238C100 239 60 244 38 249C31 251 28 253 28 256C28 263 30 268 33 274C38 281 39 287 45 296C50 304 57 311 65 315C76 319 90 319 104 318C122 316 150 313 178 310C205 306 230 302.500 262 303C305 302 350 303 410 306C455 309 500 311 560 311.500C610 311 660 309 690 303C710 301 728 297 738 290C744 286 743 281 749 276C754 270 759 268 762 261" />
      </Ink>
      <RedFrame />
    </Screen>
  );
}
